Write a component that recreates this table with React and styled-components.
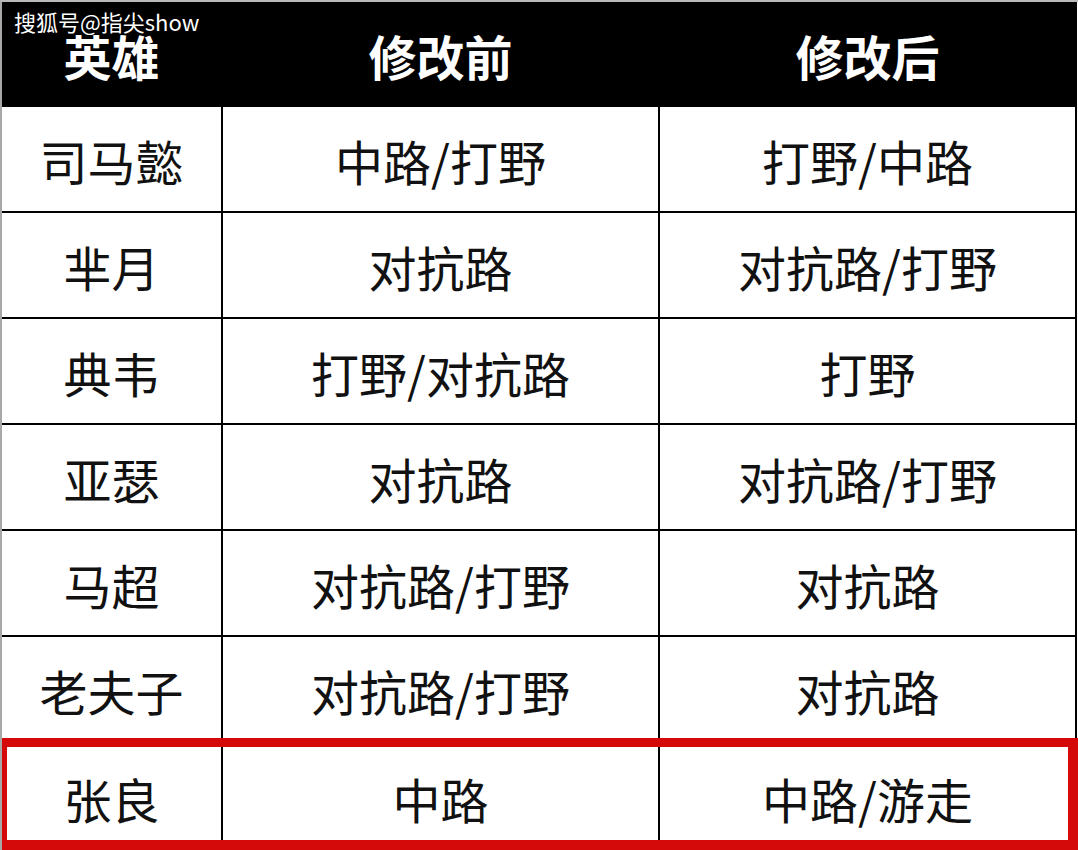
import React from "react";
import styled, { createGlobalStyle } from "styled-components";

const Global = createGlobalStyle`
  html, body { margin: 0; padding: 0; background: #ffffff; }
  body { font-family: "Noto Sans CJK SC", "Noto Sans", sans-serif; }
  * { box-sizing: border-box; }
`;

const Frame = styled.div`
  position: relative;
  width: 1078px;
  height: 850px;
  overflow: hidden;
  background: #ffffff;
  border-top: 2px solid #b8b8b8;
  border-left: 2px solid #a8a8a8;
  padding-right: 1px;
  display: flex;
  flex-direction: column;
`;

const Watermark = styled.div`
  position: absolute;
  top: 4px;
  left: 12px;
  color: #ffffff;
  font-family: "Noto Sans CJK SC", "Noto Sans", sans-serif;
  font-size: 22px;
  line-height: 30px;
  text-shadow: 0 0 2px rgba(0, 0, 0, 0.6);
  z-index: 3;
`;

const Row = styled.div`
  position: relative;
  display: grid;
  grid-template-columns: 221px 437px 1fr;
  height: ${(p) => p.$h}px;
  background: ${(p) => (p.$head ? "#000000" : "#ffffff")};
  border-bottom: ${(p) => (p.$line ? "2px solid #000000" : "none")};
  flex-shrink: 0;
`;

const HighlightRow = styled(Row)`
  &::after {
    content: "";
    position: absolute;
    top: -5px;
    left: -2px;
    right: -1px;
    bottom: 0;
    border-style: solid;
    border-color: #d40a0a;
    border-width: 9px 10px 10px 7px;
    pointer-events: none;
    z-index: 2;
  }
`;

const Cell = styled.div`
  display: flex;
  align-items: center;
  justify-content: center;
  border-right: 2px solid #000000;
  font-family: "Noto Sans CJK SC", "Noto Sans", sans-serif;
  font-size: 48px;
  line-height: 1;
  white-space: nowrap;
  color: ${(p) => (p.$head ? "#ffffff" : "#111111")};
  font-weight: ${(p) => (p.$head ? 700 : 400)};
  padding-top: ${(p) => (p.$head ? 0 : 2)}px;
`;

const rows = [
  ["司马懿", "中路/打野", "打野/中路"],
  ["芈月", "对抗路", "对抗路/打野"],
  ["典韦", "打野/对抗路", "打野"],
  ["亚瑟", "对抗路", "对抗路/打野"],
  ["马超", "对抗路/打野", "对抗路"],
  ["老夫子", "对抗路/打野", "对抗路"],
];

export default function App() {
  return (
    <>
      <Global />
      <Frame>
        <Watermark>搜狐号@指尖show</Watermark>
        <Row $head $h={105}>
          {["英雄", "修改前", "修改后"].map((t) => (
            <Cell $head key={t}>{t}</Cell>
          ))}
        </Row>
        {rows.map((r) => (
          <Row key={r[0]} $h={106} $line>
            {r.map((t, i) => (
              <Cell key={i}>{t}</Cell>
            ))}
          </Row>
        ))}
        <HighlightRow $h={107}>
          {["张良", "中路", "中路/游走"].map((t, i) => (
            <Cell key={i}>{t}</Cell>
          ))}
        </HighlightRow>
      </Frame>
    </>
  );
}
